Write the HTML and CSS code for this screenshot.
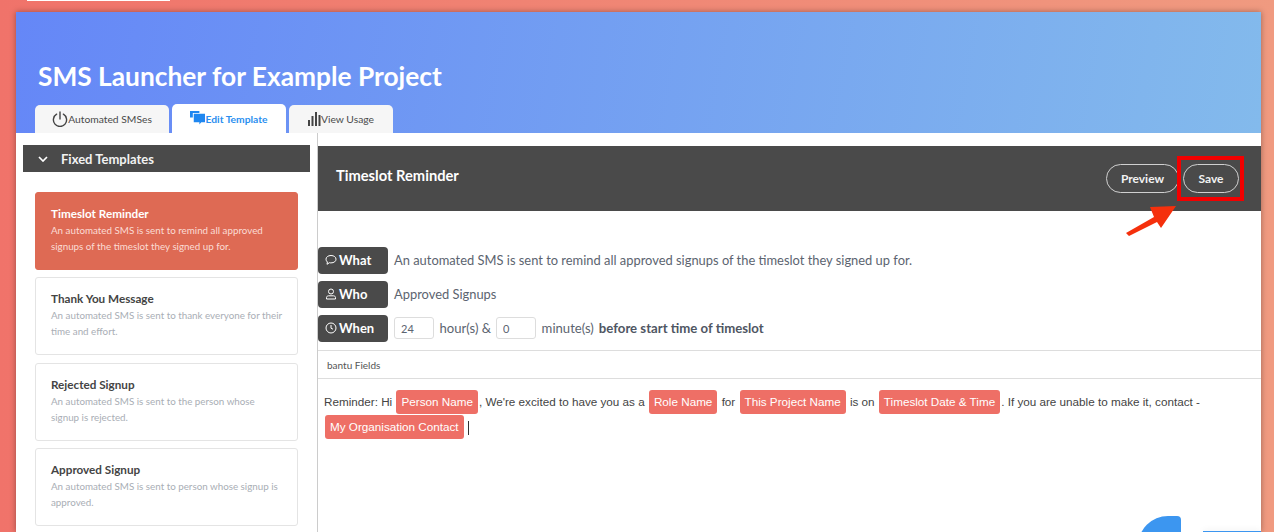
FILE: index.html
```html
<!DOCTYPE html>
<html>
<head lang="en">
    <meta charset="UTF-8">
    <title>SMS Launcher</title>
    <link rel="stylesheet" href="styles.css">
</head>
<body>

<div class="topbar"></div>

<div class="panel">
    <div class="hero">
        <h1>SMS Launcher for Example Project</h1>
        <div class="tabs">
            <a class="tab tab-sms">
                <svg width="16" height="16" viewBox="0 0 16 16" fill="none" stroke="#444" stroke-width="1.4" stroke-linecap="round"><path d="M4.6 3.2a6.6 6.6 0 1 0 6.8 0"/><path d="M8 1v7"/></svg>
                Automated SMSes
            </a>
            <a class="tab tab-edit active">
                <svg width="15" height="15" viewBox="0 0 16 16" fill="#1f87f0"><path d="M0 0h10v2H3v5H0z"/><path d="M4 3h12v9h-4l-2 2.500V12H4z"/></svg>
                Edit Template
            </a>
            <a class="tab tab-usage">
                <svg width="13" height="14" viewBox="0 0 13 14" fill="#444"><rect x="0" y="8" width="2" height="6"/><rect x="3.500" y="4" width="2" height="10"/><rect x="7" y="0" width="2" height="14"/><rect x="10.500" y="3" width="2" height="11"/></svg>
                View Usage
            </a>
        </div>
    </div>

    <div class="content">
        <div class="sidebar">
            <div class="side-head">
                <svg width="10" height="6" viewBox="0 0 10 6" fill="none" stroke="#fff" stroke-width="1.700"><path d="M1 1l4 4 4-4"/></svg>
                <span>Fixed Templates</span>
            </div>
            <div class="card selected">
                <h4>Timeslot Reminder</h4>
                <p>An automated SMS is sent to remind all approved signups of the timeslot they signed up for.</p>
            </div>
            <div class="card">
                <h4>Thank You Message</h4>
                <p>An automated SMS is sent to thank everyone for their time and effort.</p>
            </div>
            <div class="card">
                <h4>Rejected Signup</h4>
                <p>An automated SMS is sent to the person whose signup is rejected.</p>
            </div>
            <div class="card">
                <h4>Approved Signup</h4>
                <p>An automated SMS is sent to person whose signup is approved.</p>
            </div>
        </div>

        <div class="main">
            <div class="main-head">
                <h3>Timeslot Reminder</h3>
                <div class="actions">
                    <button>Preview</button>
                    <button class="save">Save</button>
                </div>
            </div>

            <div class="rows">
                <div class="row">
                    <span class="pill">
                        <svg width="12" height="12" viewBox="0 0 12 12" fill="none" stroke="#fff"><path d="M6 1.500c3 0 5 1.600 5 3.700S9 8.900 6 8.900c-.6 0-1.100 0-1.600-.2L2 10.300l.4-2.300C1.500 7.300 1 6.300 1 5.200c0-2.100 2-3.700 5-3.700z"/></svg>
                        What
                    </span>
                    <span>An automated SMS is sent to remind all approved signups of the timeslot they signed up for.</span>
                </div>
                <div class="row">
                    <span class="pill">
                        <svg width="12" height="12" viewBox="0 0 12 12" fill="none" stroke="#fff"><circle cx="6" cy="3.500" r="2.500"/><path d="M1.500 11V9.500c0-1 1-1.700 2-1.700h5c1 0 2 .7 2 1.700V11z"/></svg>
                        Who
                    </span>
                    <span>Approved Signups</span>
                </div>
                <div class="row">
                    <span class="pill">
                        <svg width="12" height="12" viewBox="0 0 12 12" fill="none" stroke="#fff"><circle cx="6" cy="6" r="5"/><path d="M6 3v3.200l2 1"/></svg>
                        When
                    </span>
                    <input class="num" type="text" value="24">
                    <span class="unit">hour(s) &amp;</span>
                    <input class="num" type="text" value="0">
                    <span class="unit">minute(s)</span>
                    <b>before start time of timeslot</b>
                </div>
            </div>

            <div class="fields">bantu Fields</div>

            <div class="editor">
                <span>Reminder: Hi</span> <span class="tag">Person Name</span><span>, We're excited to have you as a</span> <span class="tag">Role Name</span> <span>for</span> <span class="tag">This Project Name</span> <span>is on</span> <span class="tag">Timeslot Date &amp; Time</span><span>. If you are unable to make it, contact -</span> <span class="tag">My Organisation Contact</span> <span class="caret"></span>
            </div>
        </div>
    </div>

    <div class="blob"></div>
    <div class="corner"></div>
</div>

<!-- annotation over the screenshot -->
<div class="redbox"></div>
<svg class="arrow" width="54" height="34" viewBox="0 0 54 34"><path d="M2 29L30 13 26 3 52 2 37 24 33 18 5 32z" fill="#f5300c"/></svg>

</body>
</html>
```

FILE: styles.css
```css
*{
    margin: 0px;
    padding: 0px;
    box-sizing: border-box;
}
body{
    height: 532px;
    overflow: hidden;
    background: linear-gradient(90deg, #f0736a 0%, #f09a80 100%);
    font-family: "Lato", "Liberation Sans", sans-serif;
    color: #4a4a4a;
}
.topbar{
    width: 143px;
    height: 1px;
    margin-left: 27px;
    background-color: #ffffff;
}
.panel{
    position: relative;
    width: 1245px;
    height: 520px;
    margin: 11px 0px 0px 16px;
    background-color: #ffffff;
    box-shadow: 0px 0px 6px rgba(0, 0, 0, 0.35);
    overflow: hidden;
}
.hero{
    display: flex;
    flex-direction: column;
    justify-content: flex-end;
    height: 121px;
    padding-left: 19px;
    background: linear-gradient(100deg, #6587f7 0%, #83baec 100%);
}
h1{
    margin: 0px 0px 12px 3px;
    color: #ffffff;
    font-size: 26.3px;
    line-height: 32px;
    font-weight: 700;
}
.tabs{
    display: flex;
    align-items: flex-end;
    gap: 3px;
}
.tab{
    display: flex;
    align-items: center;
    justify-content: center;
    height: 28px;
    background-color: #f6f6f6;
    border-radius: 5px 5px 0px 0px;
    color: #4a4a4a;
    font-size: 10.3px;
}
.tab-sms{
    width: 134px;
}
.tab-edit{
    width: 114px;
}
.tab-usage{
    width: 104px;
}
.tab.active{
    height: 29px;
    background-color: #ffffff;
    color: #2b8ff0;
    font-weight: 700;
}
.content{
    display: flex;
    height: 399px;
}
.sidebar{
    width: 301px;
    padding: 12px 0px 0px 7px;
    flex-shrink: 0;
}
.side-head{
    display: flex;
    align-items: center;
    height: 27px;
    width: 287px;
    padding-left: 15px;
    margin-bottom: 20px;
    background-color: #4a4a4a;
    color: #f2f2f2;
    font-size: 13px;
    font-weight: 700;
}
.side-head span{
    margin-left: 13px;
}
.card{
    width: 263px;
    height: 78px;
    margin: 0px 0px 7.3px 12px;
    padding: 13px 12px 0px 15px;
    border: 1px solid #e4e4e4;
    border-radius: 3px;
}
.card h4{
    font-size: 11.7px;
    line-height: 14px;
    font-weight: 700;
    color: #444444;
}
.card p{
    margin-top: 2px;
    font-size: 9.8px;
    line-height: 16px;
    color: #a9aeb5;
}
.card.selected{
    background-color: #de6a54;
    border-color: #de6a54;
}
.card.selected h4{
    color: #ffffff;
}
.card.selected p{
    color: #fbdcd4;
}
.main{
    flex: 1;
    padding-top: 13px;
    border-left: 1px solid #cccccc;
}
.main-head{
    display: flex;
    justify-content: space-between;
    height: 65px;
    padding: 20px 22px 0px 18px;
    background-color: #4a4a4a;
}
.main-head h3{
    color: #ffffff;
    font-size: 14.700px;
    line-height: 18px;
    font-weight: 700;
}
.actions{
    display: flex;
    gap: 4px;
    margin-top: -2px;
}
.actions button{
    width: 73px;
    height: 29px;
    background-color: transparent;
    border: 1px solid #d0d0d0;
    border-radius: 15px;
    color: #f2f2f2;
    font-family: inherit;
    font-size: 12px;
    font-weight: 700;
}
.actions .save{
    width: 56px;
}
.rows{
    display: flex;
    flex-direction: column;
    gap: 7px;
    padding-top: 36px;
}
.row{
    display: flex;
    align-items: center;
    height: 27px;
    padding-bottom: 1px;
    font-size: 12.9px;
    color: #5c6470;
}
.pill{
    display: flex;
    align-items: center;
    gap: 2px;
    width: 70px;
    height: 27px;
    margin-right: 6px;
    padding: 0px 0px 1px 7px;
    background-color: #4a4a4a;
    border-radius: 4px;
    color: #ffffff;
    font-size: 13px;
    font-weight: 700;
}
.num{
    width: 40px;
    height: 22px;
    padding-left: 6px;
    border: 1px solid #dddddd;
    border-radius: 3px;
    color: #5c6470;
    font-family: inherit;
    font-size: 11px;
}
.unit{
    margin: 0px 5px 0px 5.5px;
    font-size: 13.1px;
}
.row b{
    color: #4f5663;
    font-size: 13.2px;
    font-weight: 700;
}
.fields{
    height: 29px;
    margin-top: 8px;
    padding: 8px 0px 0px 9px;
    border-top: 1px solid #dddddd;
    border-bottom: 1px solid #dddddd;
    color: #555555;
    font-size: 10px;
    line-height: 13px;
}
.editor{
    padding: 10px 10px 0px 6px;
    color: #444444;
    font-family: "Liberation Sans", sans-serif;
    font-size: 11.7px;
    line-height: 25px;
}
.tag{
    display: inline-block;
    height: 24px;
    margin: 0px 1px;
    padding: 0px 5px;
    background-color: #ee6f66;
    border-radius: 3px;
    color: #ffffff;
    line-height: 23px;
}
.caret{
    display: inline-block;
    width: 1px;
    height: 14px;
    background-color: #333333;
    vertical-align: middle;
}
.blob{
    position: absolute;
    left: 1122px;
    top: 504px;
    width: 43px;
    height: 30px;
    background-color: #3c96f0;
    border-radius: 30px 4px 0px 0px;
}
.corner{
    position: absolute;
    left: 1187px;
    top: 519px;
    width: 58px;
    height: 1px;
    background-color: #3c96f0;
    box-shadow: 0px 0px 6px rgba(0, 0, 0, 0.2);
}
.redbox{
    position: absolute;
    left: 1177px;
    top: 156px;
    width: 67px;
    height: 45px;
    border: 4px solid #f20000;
}
.arrow{
    position: absolute;
    left: 1124px;
    top: 204px;
}
```
